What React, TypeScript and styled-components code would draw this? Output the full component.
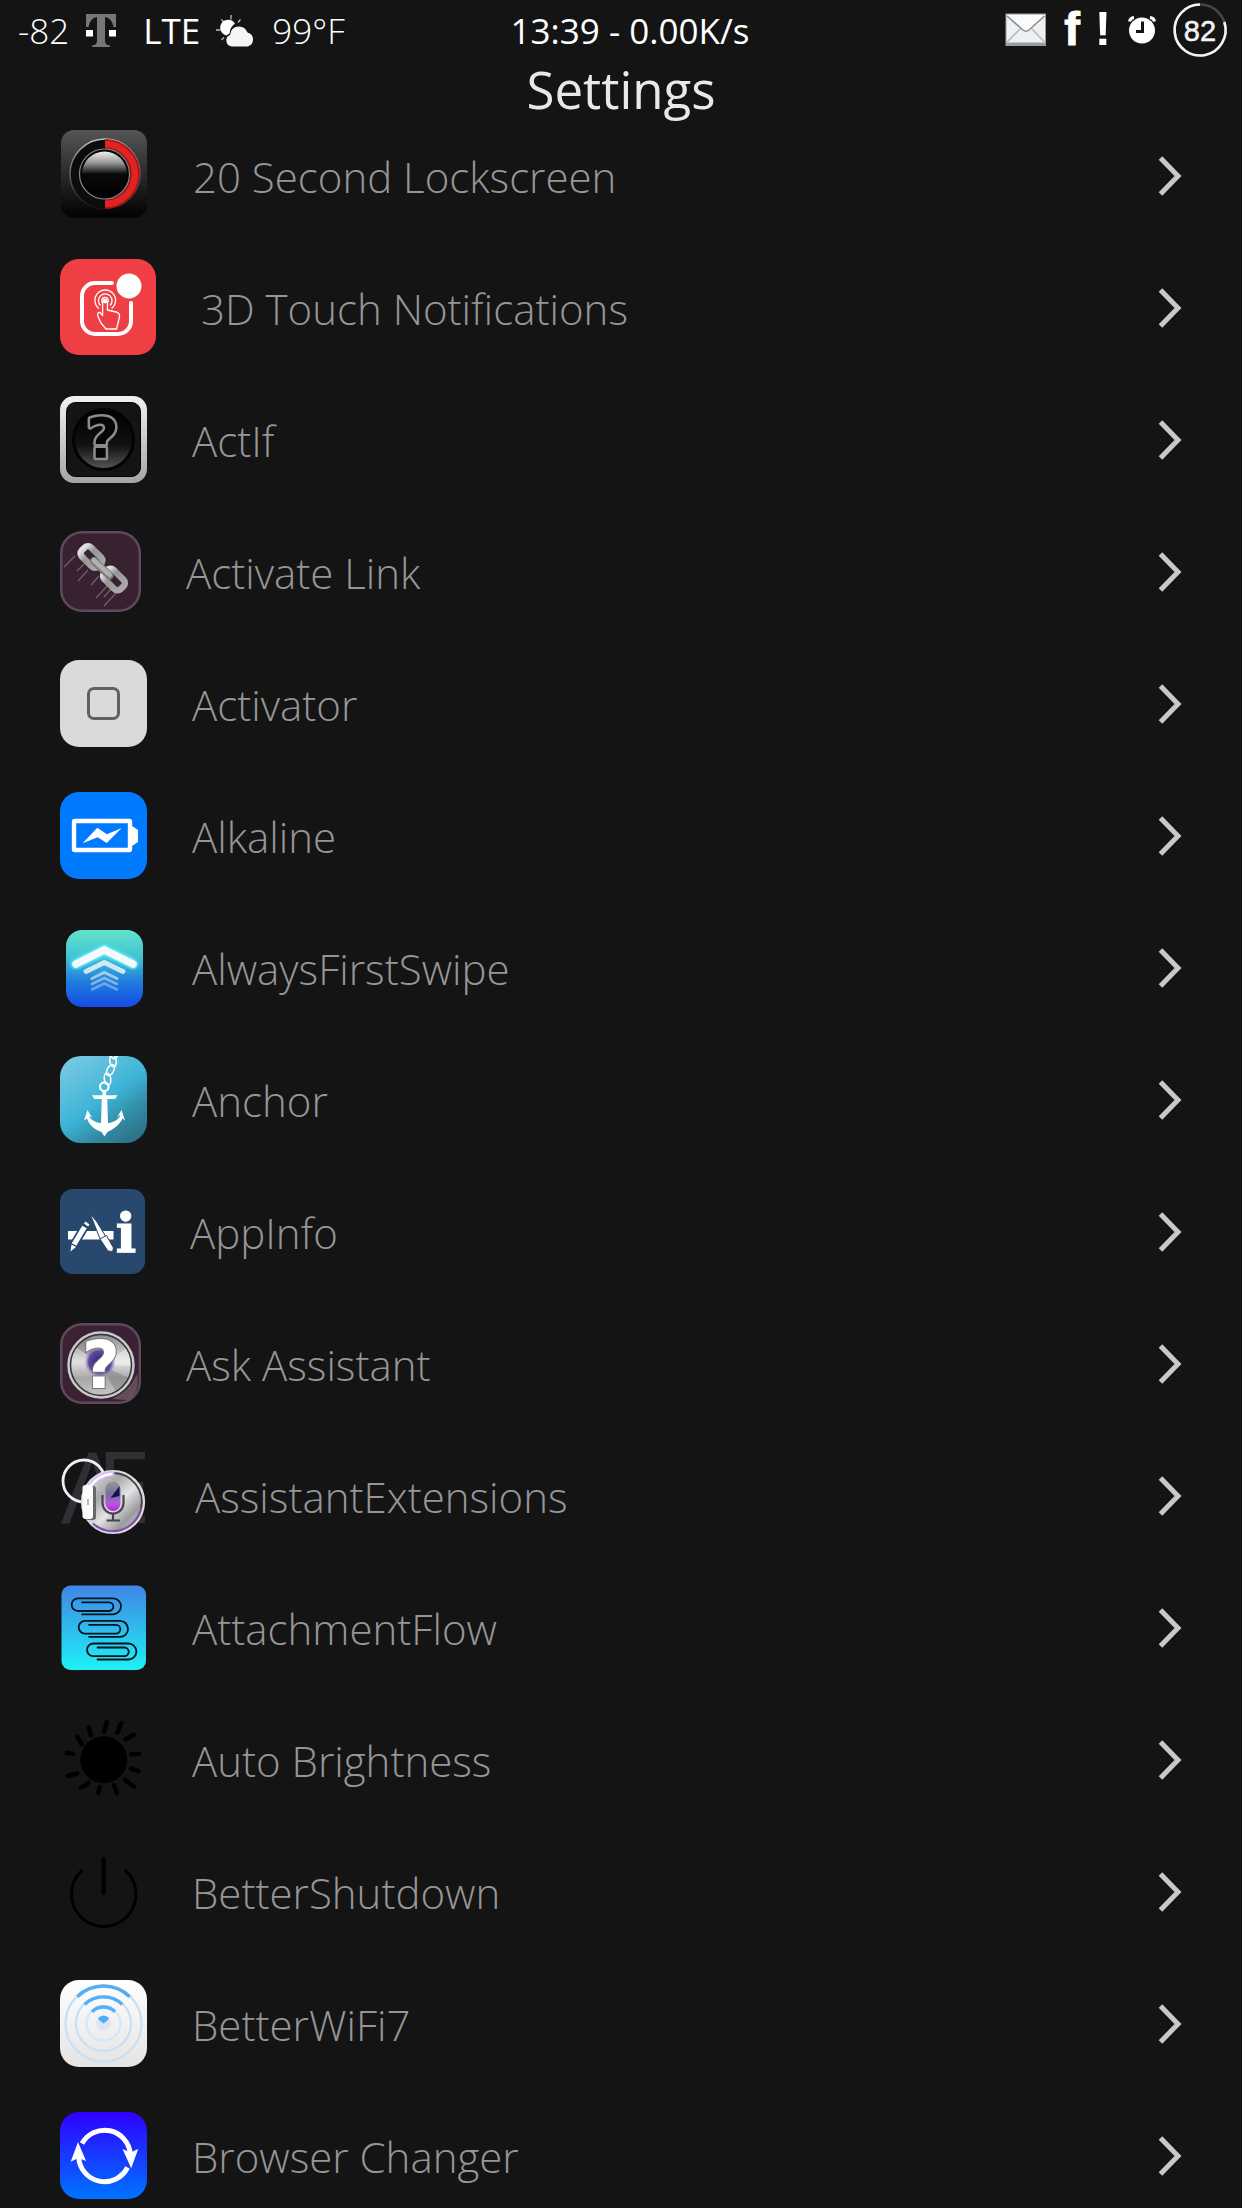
import React from "react";
import styled, { createGlobalStyle } from "styled-components";

const GlobalStyle = createGlobalStyle`
  *, *::before, *::after { box-sizing: border-box; }
  body {
    margin: 0;
    background: #141414;
    font-family: "Open Sans", "Noto Sans", sans-serif;
  }
`;

const Screen = styled.div`
  display: flex;
  flex-direction: column;
  height: 100vh;
  overflow: hidden;
  background: #141414;
`;

const StatusBar = styled.div`
  display: grid;
  grid-template-columns: 1fr auto 1fr;
  align-items: center;
  flex: none;
  height: 62px;
  padding-left: 18px;
  color: #fff;
`;

const StatusGroup = styled.div`
  display: flex;
  align-items: center;
  gap: 16px;
`;

const StatusIcons = styled(StatusGroup)`
  justify-content: flex-end;
  align-self: start;
  gap: 15px;
  height: 60px;
  padding-right: 15px;
`;

const StatusText = styled.span<{ $light?: boolean; $spaced?: boolean }>`
  font-size: 35px;
  line-height: 62px;
  font-weight: ${(p) => (p.$light ? 300 : 400)};
  margin-left: ${(p) => (p.$spaced ? "10px" : "0")};
  white-space: nowrap;
`;

const StatusIcon = styled.svg`
  display: block;
  flex: none;
  overflow: visible;
`;

const Title = styled.h1`
  flex: none;
  margin: 0;
  height: 48px;
  color: #e8e8e8;
  font-size: 51px;
  font-weight: 400;
  line-height: 54px;
  text-align: center;
`;

const List = styled.ul`
  flex: 1;
  min-height: 0;
  margin: 0;
  padding: 0;
  list-style: none;
  overflow: hidden;
`;

const Row = styled.a`
  display: flex;
  align-items: center;
  height: 132px;
  padding: 0 60px;
  color: #969696;
  text-decoration: none;
`;

const AppIcon = styled.svg`
  display: block;
  flex: none;
  margin-bottom: 2px;
  overflow: visible;
`;

const Arrow = styled.svg`
  display: block;
  flex: none;
`;

const Label = styled.span`
  flex: 1;
  margin-left: 45px;
  padding-top: 2px;
  font-size: 42px;
  font-weight: 300;
  line-height: 60px;
  white-space: nowrap;
`;

const Chevron = () => (
  <Arrow width="24" height="40" viewBox="0 0 24 40" aria-hidden="true">
    <path d="M2.5 2L20 20L2.5 38" fill="none" stroke="#c7c7cc" strokeWidth="5" />
  </Arrow>
);

const Lockscreen = () => (
  <>
    <defs>
      <linearGradient id="lsBg" x1="0" y1="0" x2="0" y2="1">
        <stop offset="0" stopColor="#555" />
        <stop offset=".5" stopColor="#2b2b2b" />
        <stop offset="1" stopColor="#020202" />
      </linearGradient>
      <linearGradient id="lsKnob" x1="0" y1="0" x2="0" y2="1">
        <stop offset="0" stopColor="#eee" />
        <stop offset=".25" stopColor="#999" />
        <stop offset=".5" stopColor="#0a0a0a" />
        <stop offset="1" stopColor="#000" />
      </linearGradient>
      <linearGradient id="lsRim" x1="0" y1="0" x2="0" y2="1">
        <stop offset="0" stopColor="#bbb" />
        <stop offset=".8" stopColor="#333" />
        <stop offset="1" stopColor="#111" />
      </linearGradient>
    </defs>
    <rect x="1" y="0" width="86" height="87" rx="13" fill="#060606" />
    <rect x="1" y="-1" width="86" height="86" rx="13" fill="url(#lsBg)" />
    <circle cx="45" cy="43" r="35" fill="#0c0c0c" stroke="url(#lsRim)" strokeWidth="1.4" />
    <path d="M45 13a30 30 0 0 1 0 60" fill="none" stroke="#a81414" strokeWidth="10" />
    <path d="M45 13a30 30 0 0 1 0 60" fill="none" stroke="#e02424" strokeWidth="6.5" />
    <circle cx="44.5" cy="43" r="25" fill="#050505" stroke="#888" strokeWidth="1.2" />
    <circle cx="44.5" cy="43" r="22.5" fill="url(#lsKnob)" />
  </>
);

const Touch = () => (
  <>
    <rect width="96" height="96" rx="19" fill="#ef3f44" />
    <path d="M52 24H35A13 13 0 0 0 22 37V62A13 13 0 0 0 35 75H58A13 13 0 0 0 71 62V44" fill="none" stroke="#fff" strokeWidth="4" strokeLinecap="round" />
    <circle cx="69" cy="27" r="12.5" fill="#fff" />
    <g fill="none" stroke="#fff" strokeWidth="1.3" strokeLinejoin="round">
      <path d="M39 49.500A10.300 10.300 0 1 1 51.500 49.500" />
      <path d="M40.500 46.500A6.800 6.800 0 1 1 50 46.500" />
      <circle cx="45" cy="41.5" r="3.2" />
      <path d="M42.600 42V56.500L40 53.500Q37 53 37.800 57L41 64L46 70H56.500L59.500 58Q60 54 56 53L47.400 51V42" fill="#ef3f44" />
    </g>
    <circle cx="45" cy="42" r="2.4" fill="#fff" />
  </>
);

const ActIf = () => (
  <>
    <defs>
      <linearGradient id="aiRim" x1="0" y1="0" x2="0" y2="1">
        <stop offset="0" stopColor="#f2f2f2" />
        <stop offset="1" stopColor="#a4a4a4" />
      </linearGradient>
      <linearGradient id="aiBall" x1="0" y1="0" x2="0" y2="1">
        <stop offset="0" stopColor="#000" />
        <stop offset=".6" stopColor="#111" />
        <stop offset="1" stopColor="#585858" />
      </linearGradient>
    </defs>
    <rect width="87" height="87" rx="14" fill="url(#aiRim)" />
    <rect x="6.5" y="6.5" width="74" height="74" rx="9" fill="#141414" stroke="#000" />
    <circle cx="43.5" cy="43.5" r="30" fill="url(#aiBall)" stroke="#030303" strokeWidth="3" />
    <text x="42.5" y="61" textAnchor="middle" fontFamily="DejaVu Sans" fontWeight="700" fontSize="56" fill="#060606" stroke="#8c8c8c" strokeWidth="5" strokeLinejoin="round" paintOrder="stroke">?</text>
  </>
);

const Link = () => (
  <>
    <defs>
      <linearGradient id="lkMetal" x1="0" y1="0" x2="1" y2="0">
        <stop offset="0" stopColor="#e0e0e0" />
        <stop offset=".35" stopColor="#969696" />
        <stop offset="1" stopColor="#a8a8a8" />
      </linearGradient>
    </defs>
    <rect x="1.2" y="1.2" width="78.600" height="78.600" rx="21" fill="#382131" stroke="#5f4a5b" strokeWidth="2.4" />
    <path d="M4 36L15 25M17 40L24 33M18 50L28 39M31 54L39 45M36 67L48 54M44 66L51 58M44 75L56 62" stroke="#735f70" strokeWidth="1.2" />
    <g fill="none" stroke="url(#lkMetal)" strokeWidth="6.5">
      <rect x="-11.5" y="-6.5" width="23" height="13" rx="4.5" transform="translate(31.5 26) rotate(45)" />
      <rect x="-11.5" y="-6.5" width="23" height="13" rx="4.5" transform="translate(54 48.5) rotate(45)" />
    </g>
    <path d="M34 30L49.500 44.500" stroke="#7e7e7e" strokeWidth="8" strokeLinecap="round" />
    <path d="M34 29.500L49.500 43.500" stroke="#b0b0b0" strokeWidth="5" strokeLinecap="round" />
  </>
);

const Activator = () => (
  <>
    <rect width="87" height="87" rx="19" fill="#dadada" />
    <rect x="28.5" y="28.5" width="30" height="30" rx="5.5" fill="none" stroke="#606060" strokeWidth="3" />
  </>
);

const Alkaline = () => (
  <>
    <rect width="87" height="87" rx="19" fill="#007bff" />
    <rect x="14" y="29" width="56" height="29" rx="1" fill="none" stroke="#fff" strokeWidth="4.4" />
    <path d="M72 34L78 38V50L72 54Z" fill="#fff" />
    <path d="M22.700 51.300L37.300 35.700L47 42.300L61.700 36L46.700 51L37.700 45.300Z" fill="#fff" />
  </>
);

const FirstSwipe = () => (
  <>
    <defs>
      <linearGradient id="fsBg" x1="0" y1="0" x2="0" y2="1">
        <stop offset="0" stopColor="#62e4cc" />
        <stop offset=".35" stopColor="#42c3d4" />
        <stop offset=".65" stopColor="#2281dc" />
        <stop offset="1" stopColor="#144be8" />
      </linearGradient>
      <filter id="fsGlow" x="-20%" y="-40%" width="140%" height="180%">
        <feGaussianBlur stdDeviation="1.5" />
      </filter>
    </defs>
    <rect x="6" y="6" width="77" height="77" rx="16" fill="url(#fsBg)" />
    <g fill="none" stroke="#fff" strokeLinecap="round">
      <path d="M16 40L44.300 26L73 40" stroke="#5ff5ff" strokeWidth="10" filter="url(#fsGlow)" />
      <path d="M16 40L44.300 26L73 40" stroke="#f6f9fa" strokeWidth="7.5" />
      <path d="M26 47.500L44.300 38.500L63 47.500" strokeWidth="4.8" opacity=".75" />
      <path d="M32 54.500L44.300 48.500L57 54.500" strokeWidth="3" opacity=".55" />
      <path d="M32 60L44.300 54L57 60" strokeWidth="2.6" opacity=".42" />
      <path d="M32 65.500L44.300 59.500L57 65.500" strokeWidth="2.6" opacity=".35" />
    </g>
  </>
);

const Anchor = () => (
  <>
    <defs>
      <linearGradient id="anBg" x1=".15" y1="0" x2=".85" y2="1">
        <stop offset="0" stopColor="#78c9e1" />
        <stop offset=".5" stopColor="#3db4d7" />
        <stop offset=".75" stopColor="#338ca5" />
        <stop offset="1" stopColor="#2b6e84" />
      </linearGradient>
      <clipPath id="anClip"><rect width="87" height="87" rx="21" /></clipPath>
    </defs>
    <rect width="87" height="87" rx="21" fill="url(#anBg)" />
    <g clipPath="url(#anClip)" fill="none" stroke="#fff" strokeWidth="1.6">
      <ellipse cx="47.5" cy="23" rx="3.2" ry="6" transform="rotate(-8 47.5 23)" />
      <ellipse cx="50.5" cy="14" rx="3.2" ry="6" transform="rotate(28 50.5 14)" />
      <ellipse cx="53" cy="5" rx="3.2" ry="6" transform="rotate(-8 53 5)" />
      <ellipse cx="55.5" cy="-3" rx="3.2" ry="6" transform="rotate(28 55.5 -3)" />
    </g>
    <circle cx="44.3" cy="30.7" r="4.3" fill="none" stroke="#fff" strokeWidth="2.2" />
    <path d="M32 39.300H57.500L55 43H47.200L48 67C54 66.500 59.500 63 60.500 58.500L57 61.500L61.500 54L65 64.500L62.500 62.500C60 69 52 74 47.500 76L44.500 80.500L41.500 76C35 74 29 69 27 62.500L24 64.500L27.500 54L32 61.500L28.800 60C31 64 35 66.500 41 67L41.800 43H34.500Z" fill="#fff" />
    <rect x="42.5" y="35" width="3.6" height="10" fill="#fff" />
  </>
);

const AppInfo = () => (
  <>
    <rect width="85" height="85" rx="13" fill="#28486d" />
    <rect x="8" y="42" width="45.5" height="8.5" fill="#fff" />
    <path d="M13.500 56.500L26.500 34.500" stroke="#28486d" strokeWidth="8.5" />
    <path d="M14 55.500L24.500 38M26 36L27.500 34" stroke="#fff" strokeWidth="5.2" />
    <path d="M11.500 55.500L16 58L10.500 62.500Z" fill="#fff" />
    <path d="M30 24.500L37 33L46 48L40.500 51Z" fill="#fff" stroke="#28486d" strokeWidth="1" />
    <path d="M40 50L46.500 46.500L53.500 59L52.500 62.500L48 62Z" fill="#fff" stroke="#28486d" strokeWidth="1" />
    <text x="66" y="62.5" textAnchor="middle" fontFamily="DejaVu Serif" fontWeight="700" fontSize="55" fill="#fff" stroke="#fff" strokeWidth="1">i</text>
  </>
);

const AskAssistant = () => (
  <>
    <defs>
      <linearGradient id="asBase" x1="0" y1="0" x2="0" y2="1">
        <stop offset="0" stopColor="#858585" />
        <stop offset=".45" stopColor="#e2e2e2" />
        <stop offset=".7" stopColor="#a8a8a8" />
        <stop offset="1" stopColor="#c8c8c8" />
      </linearGradient>
      <radialGradient id="asCore">
        <stop offset="0" stopColor="#33206f" />
        <stop offset=".7" stopColor="#5f489f" />
        <stop offset="1" stopColor="#a99cc9" stopOpacity="0" />
      </radialGradient>
    </defs>
    <rect x="1.2" y="1.2" width="78.600" height="78.600" rx="21" fill="#3a2234" stroke="#5f4a5b" strokeWidth="2.4" />
    <path d="M52 76Q70 68 77 51Q80 70 68 77Z" fill="#75616f" opacity=".7" />
    <circle cx="41" cy="42" r="32.5" fill="url(#asBase)" stroke="#c9c9c9" strokeWidth="2.5" />
    <path d="M41 42L67 25A31 31 0 0 1 72 43Z" fill="#fff" opacity=".4" />
    <path d="M41 42L69 55A31 31 0 0 1 56 69Z" fill="#777" opacity=".45" />
    <path d="M41 42L16 24A31 31 0 0 1 30 13Z" fill="#777" opacity=".45" />
    <circle cx="41" cy="42" r="30.5" fill="none" stroke="#343438" strokeWidth="1.5" />
    <circle cx="40" cy="39" r="16" fill="url(#asCore)" />
    <text x="41" y="65" textAnchor="middle" fontFamily="DejaVu Sans" fontWeight="700" fontSize="66" fill="#fff" stroke="#77747c" strokeWidth="2" paintOrder="stroke">?</text>
  </>
);

const Extensions = () => (
  <>
    <defs>
      <linearGradient id="exDisc" x1="0" y1="0" x2="1" y2="1">
        <stop offset="0" stopColor="#f4f4f4" />
        <stop offset=".35" stopColor="#a9a9ab" />
        <stop offset=".55" stopColor="#e4e4e6" />
        <stop offset=".75" stopColor="#9b9b9e" />
        <stop offset="1" stopColor="#dcdce0" />
      </linearGradient>
      <linearGradient id="exMic" x1="0" y1="0" x2="0" y2="1">
        <stop offset="0" stopColor="#999" />
        <stop offset=".4" stopColor="#75729a" />
        <stop offset=".75" stopColor="#b35bd8" />
        <stop offset="1" stopColor="#b623e8" />
      </linearGradient>
    </defs>
    <text x="1 36" y="73" fontFamily="Open Sans" fontWeight="400" fontSize="99" fill="#302f35">AE</text>
    <circle cx="24" cy="31" r="21" fill="none" stroke="#f1f1f1" strokeWidth="2.8" />
    <circle cx="53" cy="52" r="31" fill="url(#exDisc)" stroke="#dcdcdf" strokeWidth="2.2" />
    <path d="M53 23A29 29 0 0 1 81 58.500" fill="none" stroke="#434146" strokeWidth="1.8" />
    <path d="M81 58.500A29 29 0 0 1 33 73.500" fill="none" stroke="#8250a5" strokeWidth="2.2" />
    <path d="M30 36.500A29 29 0 0 1 52 23.500" fill="none" stroke="#d9b9ff" strokeWidth="5" strokeLinecap="round" />
    <path d="M31 35.500A29 29 0 0 1 51 24" fill="none" stroke="#fff" strokeWidth="2.5" strokeLinecap="round" />
    <rect x="25" y="36" width="11" height="34" rx="3" fill="#68676b" />
    <rect x="22.5" y="35" width="10.5" height="34" rx="3" fill="#fbfbfb" />
    <rect x="27" y="49" width="2" height="6" fill="#bbb" />
    <rect x="45.5" y="31.5" width="15" height="29.5" rx="7.5" fill="url(#exMic)" />
    <path d="M59.500 36V46L50.500 48Z" fill="#17104a" />
    <path d="M42.500 45V53A10.500 10.500 0 0 0 63.500 53V45M53 64V70M46.500 70.500H60" fill="none" stroke="#454449" strokeWidth="2.2" />
  </>
);

const CLIP = "M21.400 30.300H53a8 8 0 0 0 0-16H18a6.350 6.350 0 0 0 0 12.700H49a4.350 4.350 0 0 0 0-8.700H21.400";

const Attachment = () => (
  <>
    <defs>
      <linearGradient id="atBg" x1="0" y1="0" x2="0" y2="1">
        <stop offset="0" stopColor="#4085e5" />
        <stop offset="1" stopColor="#1df1f6" />
      </linearGradient>
    </defs>
    <rect x="1.5" y="1.5" width="84.5" height="84.5" rx="9" fill="url(#atBg)" />
    <g fill="none" stroke="#06151c" strokeWidth="1.8">
      <path d={CLIP} />
      <path d={CLIP} transform="translate(7 22.6)" />
      <path d={CLIP} transform="translate(15.4 45.2)" />
    </g>
  </>
);

const Brightness = () => (
  <>
    <circle cx="43.7" cy="43.7" r="23.5" />
    <path d="M46.700 6.300L44.300 15.300M61 7.300L57.300 16.700M73.700 18.700L65.700 23.300M78.700 37.700L71.300 38.300M78.300 55.300L71 52.300M74.300 70.700Q69 68 65.300 63.700M57 77.300L54 69.300M39.700 71.300L38.300 76.300M28.300 66.700Q26 70 21 71.300M17.300 57.300L7.700 60M13 37.700L7 37M21.700 28.300L17.300 21M31 19.300L29 12" fill="none" stroke="#000" strokeWidth="4.6" strokeLinecap="round" />
  </>
);

const Shutdown = () => (
  <g fill="none" stroke="#000" strokeWidth="3" strokeLinecap="round">
    <path d="M21.700 22.700A32.200 32.200 0 1 0 65.700 22.700" />
    <path d="M43.500 11V45" strokeWidth="4" />
  </g>
);

const Wifi = () => (
  <>
    <defs>
      <linearGradient id="wfBg" x1="0" y1="0" x2="0" y2="1">
        <stop offset="0" stopColor="#fff" />
        <stop offset="1" stopColor="#e4e4e4" />
      </linearGradient>
    </defs>
    <rect width="87" height="87" rx="19" fill="url(#wfBg)" />
    <g fill="none" stroke="#c6e1f6" strokeWidth="2.2">
      <circle cx="43.5" cy="43.5" r="38" />
      <circle cx="43.5" cy="43.5" r="27.5" />
      <circle cx="43.5" cy="43.5" r="17" stroke="#d5e6f4" />
    </g>
    <circle cx="43.5" cy="43.5" r="7.5" fill="#dde6f3" />
    <g fill="none" stroke="#55adf4" strokeWidth="3.4">
      <path d="M17.300 16.700A37.500 37.500 0 0 1 69.700 16.700" />
      <path d="M24.700 24.500A27 27 0 0 1 62.300 24.500" />
      <path d="M32 31.700A16.500 16.500 0 0 1 55 31.700" />
    </g>
    <path d="M38 38Q43.500 33 49 38Q48.500 40 43.500 43.500Q38.500 40 38 38Z" fill="#4eabf5" />
  </>
);

const Browser = () => (
  <>
    <defs>
      <linearGradient id="brBg" x1="0" y1="0" x2="0" y2="1">
        <stop offset="0" stopColor="#2e00ff" />
        <stop offset="1" stopColor="#0074ff" />
      </linearGradient>
    </defs>
    <rect width="87" height="87" rx="19" fill="url(#brBg)" />
    <g fill="none" stroke="#fff" strokeWidth="5">
      <path d="M22 31.500A25.800 25.800 0 0 1 70.300 42" />
      <path d="M18.700 45A25.800 25.800 0 0 0 67.500 55.500" />
    </g>
    <path d="M18 30L26 49L18.500 46L10.700 49.700Z" fill="#fff" />
    <path d="M71.200 56.300L62.500 37L70.500 40.500L78.200 37Z" fill="#fff" />
  </>
);

interface Entry {
  name: string;
  size: number;
  art: React.FC;
}

const ENTRIES: Entry[] = [
  { name: "20 Second Lockscreen", size: 88, art: Lockscreen },
  { name: "3D Touch Notifications", size: 96, art: Touch },
  { name: "ActIf", size: 87, art: ActIf },
  { name: "Activate Link", size: 81, art: Link },
  { name: "Activator", size: 87, art: Activator },
  { name: "Alkaline", size: 87, art: Alkaline },
  { name: "AlwaysFirstSwipe", size: 87, art: FirstSwipe },
  { name: "Anchor", size: 87, art: Anchor },
  { name: "AppInfo", size: 85, art: AppInfo },
  { name: "Ask Assistant", size: 81, art: AskAssistant },
  { name: "AssistantExtensions", size: 90, art: Extensions },
  { name: "AttachmentFlow", size: 87, art: Attachment },
  { name: "Auto Brightness", size: 87, art: Brightness },
  { name: "BetterShutdown", size: 87, art: Shutdown },
  { name: "BetterWiFi7", size: 87, art: Wifi },
  { name: "Browser Changer", size: 87, art: Browser },
];

const Carrier = () => (
  <StatusIcon width="32" height="34" viewBox="0 0 32 34" role="img" aria-label="T-Mobile">
    <path d="M1 0H31V13H28.500Q27 4 20 3V27Q20 31 25 31.500V33H7V31.500Q12 31 12 27V3Q5 4 3.500 13H1Z" fill="#777" />
    <path d="M1 16H8V22.500H1ZM24 16H31V22.500H24Z" fill="#fff" />
  </StatusIcon>
);

const Weather = () => (
  <StatusIcon width="40" height="34" viewBox="0 0 40 34" role="img" aria-label="Partly cloudy">
    <path d="M15 1V5.500M5.500 5.500L8 8.500M24.500 5.500L22 8.500M0 16H4.500M5.500 26L8 23.500" stroke="#bdbdbd" strokeWidth="1.3" />
    <path d="M19 9.500A8 8 0 1 0 10.500 21.500Q12.500 20 13.500 19.500Q14 13 19 9.500Z" fill="#fff" />
    <path d="M16 32.500A6 6 0 0 1 14 21Q15 12.500 23 12.500Q29 12.500 31.500 18.500A7.200 7.200 0 0 1 31.500 32.500Z" fill="#f5f5f5" />
  </StatusIcon>
);

const Mail = () => (
  <StatusIcon width="42" height="34" viewBox="0 0 42 34" role="img" aria-label="Mail">
    <rect x=".5" y=".5" width="40.5" height="32.5" fill="#9a9d9f" />
    <rect x="1.5" y="1.5" width="38.5" height="28" fill="#eef1f4" />
    <path d="M2 29L15 16M39.500 29L27 16" stroke="#b7bcc0" strokeWidth="1.6" />
    <path d="M2 2H39.500L21 19Z" fill="#fbfbfb" />
    <path d="M2 3L18 17Q21 19.500 24 17L39.500 3" fill="none" stroke="#8b8f92" strokeWidth="1.6" />
  </StatusIcon>
);

const Facebook = () => (
  <StatusIcon width="20" height="60" viewBox="0 0 20 60" role="img" aria-label="Facebook">
    <text x="10" y="45" textAnchor="middle" fontFamily="Liberation Sans" fontWeight="700" fontSize="47" fill="#fff" stroke="#fff">f</text>
  </StatusIcon>
);

const Alert = () => (
  <StatusIcon width="16" height="60" viewBox="0 0 16 60" role="img" aria-label="Alert">
    <text x="6" y="45" textAnchor="middle" fontFamily="Liberation Sans" fontWeight="700" fontSize="49" fill="#fff">!</text>
  </StatusIcon>
);

const Alarm = () => (
  <StatusIcon width="30" height="28" viewBox="0 0 30 28" role="img" aria-label="Alarm">
    <circle cx="14" cy="14.5" r="13" fill="#fff" />
    <path d="M1.500 5.500A5 5 0 0 1 6 1.500M22 1.500A5 5 0 0 1 26.500 5.500" fill="none" stroke="#fff" strokeWidth="3" />
    <path d="M14.500 5.500V15.500H8" fill="none" stroke="#141414" strokeWidth="3" />
  </StatusIcon>
);

const Battery = () => (
  <StatusIcon width="54" height="54" viewBox="0 0 54 54" role="img" aria-label="Battery 82">
    <circle cx="27" cy="27" r="25.5" fill="none" stroke="#444" strokeWidth="2.6" />
    <path d="M27 1.500A25.500 25.500 0 1 0 51.300 19" fill="none" stroke="#f2f2f2" strokeWidth="2.6" />
    <text x="27" y="38" textAnchor="middle" fontFamily="Liberation Sans" fontSize="29" fill="#f2f2f2" stroke="#f2f2f2" strokeWidth=".5">82</text>
  </StatusIcon>
);

export default function App() {
  return (
    <Screen>
      <GlobalStyle />
      <StatusBar>
        <StatusGroup>
          <StatusText $light>-82</StatusText>
          <Carrier />
          <StatusText $spaced>LTE</StatusText>
          <Weather />
          <StatusText $light>99°F</StatusText>
        </StatusGroup>
        <StatusText>13:39 - 0.00K/s</StatusText>
        <StatusIcons>
          <Mail />
          <Facebook />
          <Alert />
          <Alarm />
          <Battery />
        </StatusIcons>
      </StatusBar>
      <Title>Settings</Title>
      <List>
        {ENTRIES.map(({ name, size, art: Art }) => (
          <li key={name}>
            <Row href="#">
              <AppIcon width={size} height={size} viewBox={`0 0 ${size} ${size}`} aria-hidden="true">
                <Art />
              </AppIcon>
              <Label>{name}</Label>
              <Chevron />
            </Row>
          </li>
        ))}
      </List>
    </Screen>
  );
}
